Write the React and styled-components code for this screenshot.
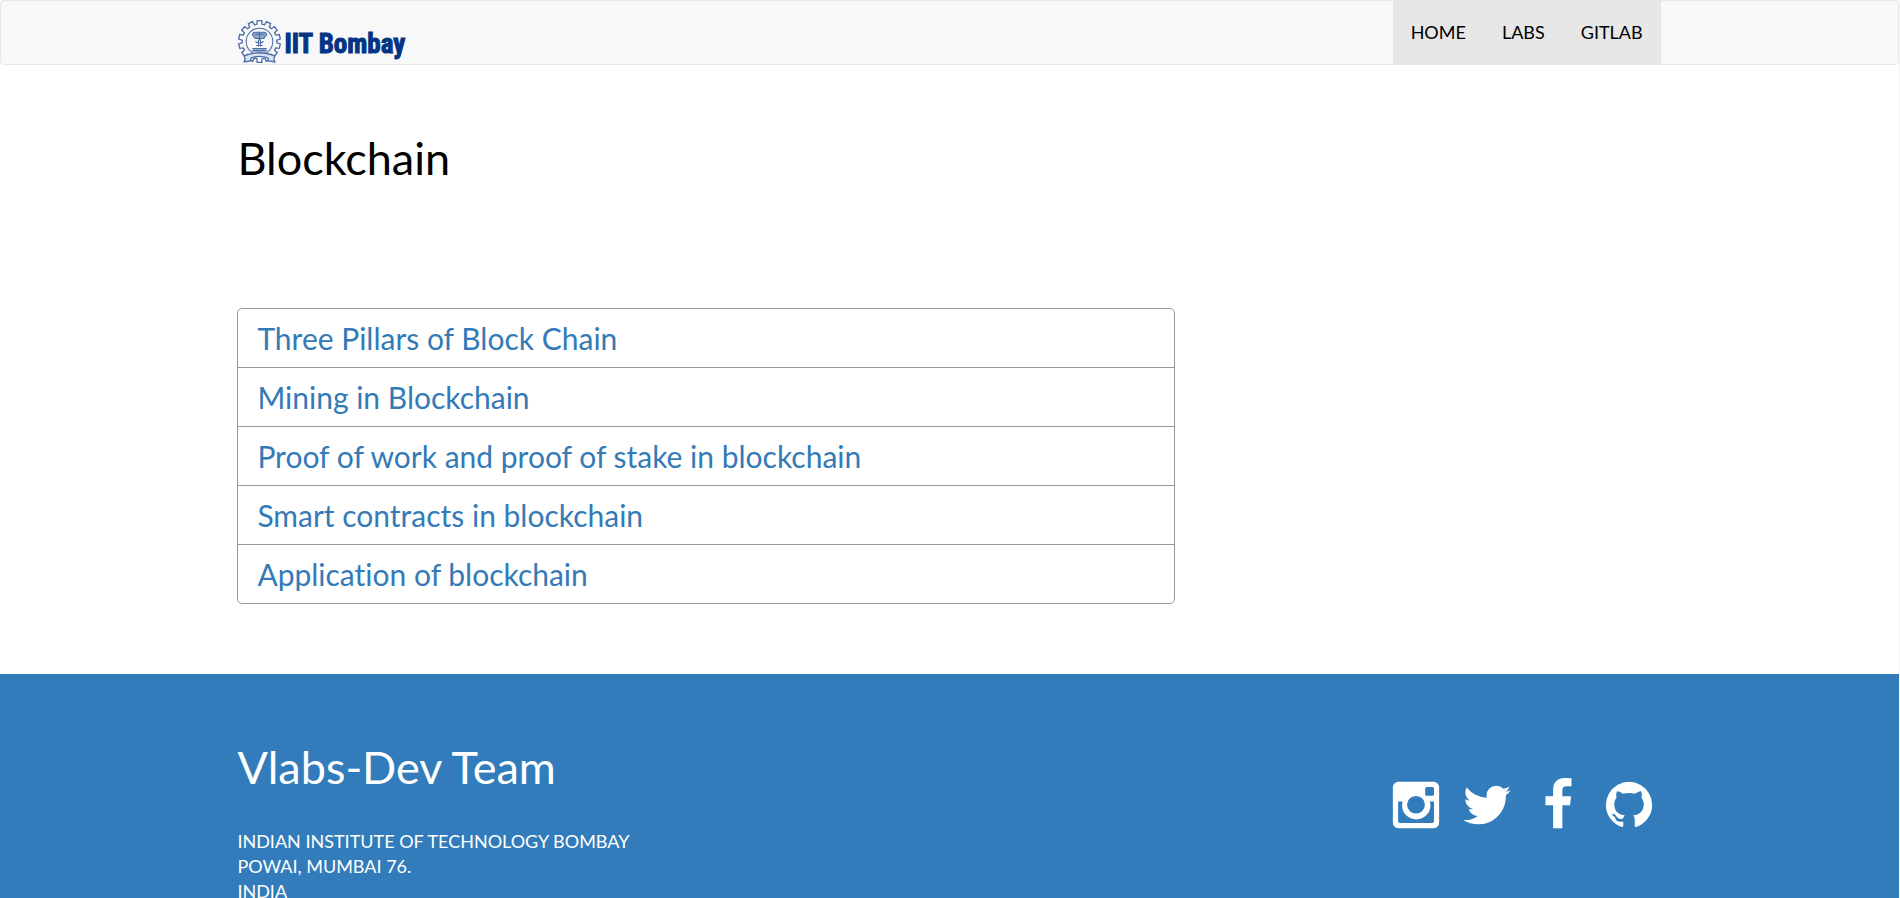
import React from "react";
import styled, { createGlobalStyle } from "styled-components";

const GlobalStyle = createGlobalStyle`
  *, *::before, *::after { box-sizing: border-box; }
  body {
    margin: 0;
    background: #fff;
    color: #000;
    font-family: Lato, "Liberation Sans", sans-serif;
    font-size: 18px;
    font-variant-ligatures: none;
    line-height: 25px;
  }
  h1, h2, p, ul { margin: 0; padding: 0; }
  ul { list-style: none; }
  a { text-decoration: none; }
`;

const Page = styled.div`
  display: flex;
  flex-direction: column;
  height: 100vh;
  overflow-y: auto;
  scrollbar-width: none;
  border-right: 1px solid #f5f5f5;
`;

const Header = styled.header`
  flex: none;
  display: flex;
  justify-content: space-between;
  padding: 0 12.5%;
  border: 1px solid #e7e7e7;
  border-radius: 4px;
  background: #f8f8f8;
`;

const Brand = styled.a`
  display: flex;
  align-items: flex-end;
  gap: 3px;
  color: #043584;
`;

const BrandName = styled.span`
  font: bold 27px/40px "Roboto Condensed", "Open Sans Condensed", "Liberation Sans", sans-serif;
  -webkit-text-stroke: 1px currentColor;
`;

const NavList = styled.ul`
  display: flex;
  background: #e7e7e7;
`;

const NavLink = styled.a`
  display: block;
  padding: 19px 18px;
  color: #000;
`;

const Main = styled.main`
  flex: none;
  padding: 68px 12.5% 70px;
`;

const Title = styled.h1`
  font-size: 45px;
  font-weight: 400;
  line-height: 50px;
`;

const Columns = styled.div`
  display: grid;
  grid-template-columns: 2fr 1fr;
  gap: 18px;
  margin-top: 125px;
`;

const TopicList = styled.ul`
  border: 1px solid #999;
  border-radius: 5px;
`;

const Topic = styled.li`
  & + & { border-top: 1px solid #999; }
`;

const TopicLink = styled.a`
  display: block;
  padding: 8px 19px;
  color: #337ab7;
  font-size: 30px;
  line-height: 42px;
`;

const Footer = styled.footer`
  flex: 1 0 auto;
  display: flex;
  justify-content: space-between;
  align-items: flex-start;
  padding: 68px 12.5% 60px;
  background: #327cbb;
  color: #fff;
`;

const TeamName = styled.h2`
  font-size: 45px;
  font-weight: 400;
  line-height: 50px;
`;

const Address = styled.p`
  margin-top: 37px;
`;

const SocialList = styled.ul`
  display: flex;
  gap: 17px;
  padding: 36px 6px 0 0;
`;

const SocialLink = styled.a`
  display: block;
  color: #fff;
  svg { display: block; width: 54px; height: 54px; fill: currentColor; }
`;

const NAV = ["HOME", "LABS", "GITLAB"];

const TOPICS = [
  "Three Pillars of Block Chain",
  "Mining in Blockchain",
  "Proof of work and proof of stake in blockchain",
  "Smart contracts in blockchain",
  "Application of blockchain",
];

const SOCIAL = [
  {
    name: "Instagram",
    path: "M302 128h1188q72 0 123 51t51 123v1188q0 72-51 123t-123 51H302q-72 0-123-51t-51-123V302q0-72 51-123t123-51zM1250 302q-50 0-50 50v185q0 50 50 50h193q50 0 50-50V352q0-50-50-50zM896 600a296 288 0 1 0 0 576a296 288 0 1 0 0-576zM302 779v657q0 56 56 56h1078q57 0 57-56V779h-141q22 66 22 138a470 457 0 0 1-940 0q0-72 22-138z",
  },
  {
    name: "Twitter",
    path: "M1684 408q-67 98-162 167 1 14 1 42 0 130-38 259.5t-115.5 248.5-184.5 210.5-258 146-323 54.5q-271 0-492-145 35 4 78 4 225 0 401-138-105-2-188-64.5t-114-159.5q33 5 61 5 43 0 85-11-112-23-185.5-111.5t-73.5-205.5v-4q68 38 146 41-66-44-105-115t-39-154q0-88 44-163 121 149 294.5 238.5t371.5 99.5q-8-38-8-74 0-134 94.5-228.5t228.5-94.5q140 0 236 102 109-21 205-78-37 115-142 178 93-10 186-50z",
  },
  {
    name: "Facebook",
    path: "M1343 12v264h-157q-86 0-116 36t-30 108v189h293l-39 296h-254v759h-306v-759h-255v-296h255v-218q0-186 104-288.5t277-102.5q147 0 228 12z",
  },
  {
    name: "GitHub",
    path: "M896 128q209 0 385.500 103t279.500 279.500 103 385.500q0 251-146.500 451.500t-378.500 277.500q-27 5-40-7t-13-30q0-3 .5-76.500t.5-134.500q0-97-52-142 57-6 102.500-18t94-39 81-66.500 53-105 20.500-150.500q0-119-79-206 37-91-8-204-28-9-81 11t-92 44l-38 24q-93-26-192-26t-192 26q-16-11-42.500-27t-83.500-38.500-85-13.500q-45 113-8 204-79 87-79 206 0 85 20.500 150t52.500 105 80.500 67 94 39 102.500 18q-39 36-49 103-21 10-45 15t-57 5-65.500-21.500-55.500-62.500q-19-32-48.500-52t-49.500-24l-20-3q-21 0-29 4.500t-5 11.500 9 14 13 12l7 5q22 10 43.500 38t31.500 51l10 23q13 38 44 61.500t67 30 69.500 7 55.500-3.500l23-4q0 38 .5 88.500t.5 54.500q0 18-13 30t-40 7q-232-77-378.500-277.500t-146.500-451.500q0-209 103-385.500t279.500-279.500 385.500-103z",
  },
];

function gearPath() {
  const teeth = 14;
  const pts = [];
  for (let i = 0; i < teeth; i++) {
    const angle = (i * 2 * Math.PI) / teeth - Math.PI / 2;
    [[-0.15, 17], [-0.11, 20.500], [0.11, 20.500], [0.15, 17]].forEach(([d, r]) => {
      pts.push(`${(21 + r * Math.cos(angle + d)).toFixed(2)} ${(21 + r * Math.sin(angle + d)).toFixed(2)}`);
    });
  }
  return `M${pts.join("L")}Z`;
}

function Emblem() {
  return (
    <svg width="43" height="44" viewBox="0 0 42 43" fill="none" stroke="#4a6ba6" aria-hidden="true">
      <path d={gearPath()} fill="#f8f8f8" strokeWidth="1.3" />
      <circle cx="21" cy="21" r="13" />
      <path d="M14 15q0-3 3-3h8q3 0 3 3l-2 1q1 2-2 2h-6q-3 0-2-2z" fill="#8fa5cb" />
      <path d="M21 12v8M17 14h8" />
      <path d="M20 19v7M22 19v7M17 21q4 3 8 0M18 25h6" />
      <path d="M14 28h14M14 30h14" strokeWidth="1.5" />
      <path d="M9 34q12-4 24 0l3 1-1 3 1 3-6-1-1-3q-8-3-16 0l-1 3-6 1 1-3-1-3z" fill="#dbe3ef" strokeWidth="1.3" />
    </svg>
  );
}

export default function App() {
  return (
    <>
      <GlobalStyle />
      <Page>
        <Header>
          <Brand href="#">
            <Emblem />
            <BrandName>IIT Bombay</BrandName>
          </Brand>
          <nav>
            <NavList>
              {NAV.map((label) => (
                <li key={label}><NavLink href="#">{label}</NavLink></li>
              ))}
            </NavList>
          </nav>
        </Header>
        <Main>
          <Title>Blockchain</Title>
          <Columns>
            <TopicList>
              {TOPICS.map((topic) => (
                <Topic key={topic}><TopicLink href="#">{topic}</TopicLink></Topic>
              ))}
            </TopicList>
          </Columns>
        </Main>
        <Footer>
          <div>
            <TeamName>Vlabs-Dev Team</TeamName>
            <Address>
              INDIAN INSTITUTE OF TECHNOLOGY BOMBAY<br />
              POWAI, MUMBAI 76.<br />
              INDIA
            </Address>
          </div>
          <SocialList>
            {SOCIAL.map(({ name, path }) => (
              <li key={name}>
                <SocialLink href="#" aria-label={name}>
                  <svg viewBox="0 0 1792 1792" aria-hidden="true"><path fillRule="evenodd" d={path} /></svg>
                </SocialLink>
              </li>
            ))}
          </SocialList>
        </Footer>
      </Page>
    </>
  );
}
